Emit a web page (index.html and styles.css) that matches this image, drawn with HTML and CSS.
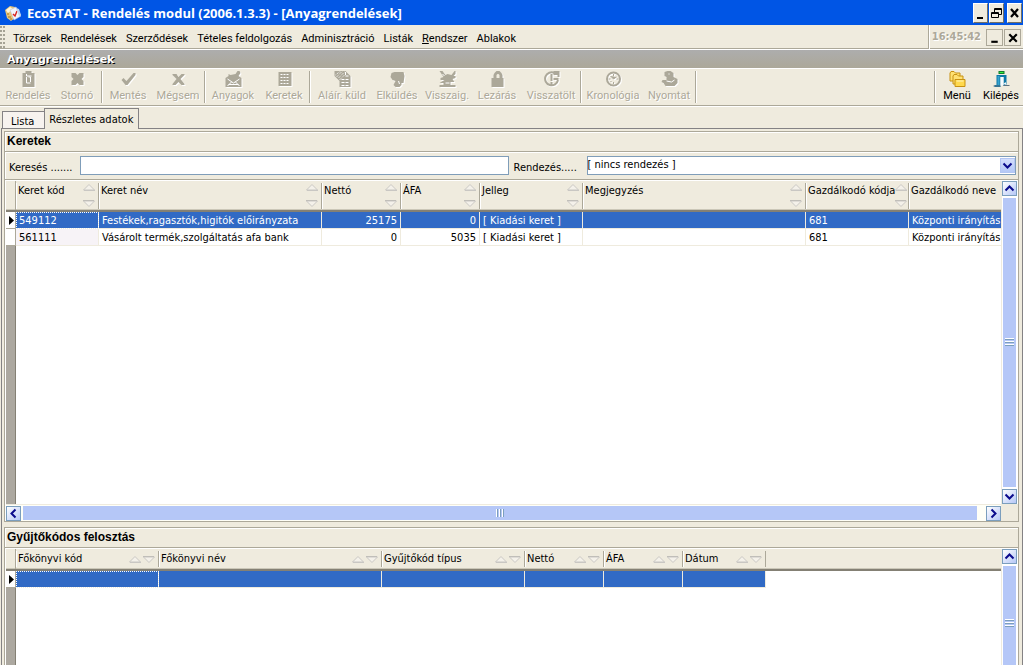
FILE: index.html
```html
<!DOCTYPE html>
<html lang="hu">
<head>
<meta charset="utf-8">
<title>EcoSTAT - Rendelés modul</title>
<link rel="stylesheet" href="styles.css">
</head>
<body>
<svg class="defs" aria-hidden="true">
  <symbol id="sort-up" viewBox="0 0 12 7"><path d="M.5 6 6 .5 11.500 6z" fill="#f4f1ea" stroke="#c9c7c3"/><path d="M1 6.500h11" stroke="#c9c7c3"/></symbol>
  <symbol id="sort-down" viewBox="0 0 12 7"><path d="M.5 1 6 6.500 11.500 1z" fill="#f4f1ea" stroke="#c9c7c3"/><path d="M0 .5h11" stroke="#c0beb9"/></symbol>
  <symbol id="chev-up" viewBox="0 0 13 13"><path d="M2.500 8.500 6.500 4.500l4 4" fill="none" stroke="#0a0a8c" stroke-width="2"/></symbol>
  <symbol id="chev-down" viewBox="0 0 13 13"><path d="M2.500 4.500 6.500 8.500l4-4" fill="none" stroke="#0a0a8c" stroke-width="2"/></symbol>
  <symbol id="chev-left" viewBox="0 0 13 13"><path d="M8.500 2.500 4.500 6.500l4 4" fill="none" stroke="#0a0a8c" stroke-width="2"/></symbol>
  <symbol id="chev-right" viewBox="0 0 13 13"><path d="M4.500 2.500 8.500 6.500l-4 4" fill="none" stroke="#0a0a8c" stroke-width="2"/></symbol>
</svg>

<header class="titlebar">
  <svg class="app-icon" viewBox="0 0 16 16"><path d="M0 5 5 1l5 1 1 10-5 4-4-3z" fill="#e9c77b"/><path d="m1 5 4-3 3 2-5 4z" fill="#fff6dc"/><path d="m5 5 6-3 5 9-7 4z" fill="#f2f5fb" stroke="#b9c3d6" stroke-width=".6"/><path d="m8 9 2 2 2-5" fill="none" stroke="#d8231f" stroke-width="1.400"/><path d="m11 3 3 1 2 6-2 1z" fill="#c5d6ee"/><path d="M2 9h2M3 12h3M5 14h2" stroke="#a8741c"/></svg>
  <h1>EcoSTAT - Rendelés modul (2006.1.3.3) - [Anyagrendelések]</h1>
  <div class="window-buttons">
    <button class="win" aria-label="Kis méret"><svg viewBox="0 0 13 18"><path d="M3 14h6" stroke="#000" stroke-width="2"/></svg></button>
    <button class="win" aria-label="Előző méret"><svg viewBox="0 0 13 18"><path d="M4.500 8V4.500h7v6H9M4 5.500h8M1.500 8.500h7v5h-7zM1 9.500h8" fill="none" stroke="#000"/></svg></button>
    <button class="win close" aria-label="Bezárás"><svg viewBox="0 0 13 18"><path d="m3 5 7 8M10 5l-7 8" stroke="#000" stroke-width="2.200"/></svg></button>
  </div>
</header>

<nav class="menubar">
  <span class="grip"></span>
  <div class="menus">
    <button>Törzsek</button><button>Rendelések</button><button>Szerződések</button><button>Tételes feldolgozás</button><button>Adminisztráció</button><button>Listák</button><button><u>R</u>endszer</button><button>Ablakok</button>
  </div>
  <div class="clock"><time>16:45:42</time></div>
  <button class="mdi" aria-label="Kis méret"><svg viewBox="0 0 14 14"><path d="M4 11h6" stroke="#000" stroke-width="2"/></svg></button>
  <button class="mdi" aria-label="Bezárás"><svg viewBox="0 0 14 14"><path d="m4 4 7 7M11 4l-7 7" stroke="#000" stroke-width="2"/></svg></button>
</nav>

<h2 class="form-title">Anyagrendelések</h2>

<div class="toolbar">
  <div class="group">
    <button class="tool w50" disabled><svg viewBox="0 0 16 16"><path d="M5 0h6v2h3v14H2V2h3z"/><path d="M6 3v2h5M6 6v6h4M8 6h2v5" class="cut"/></svg>Rendelés</button>
    <button class="tool w48" disabled><svg viewBox="0 0 16 16"><path d="M2 2h4l2 2 2-2h4v4l-2 2 2 2v4h-4l-2-2-2 2H2v-4l2-2-2-2z"/></svg>Stornó</button>
  </div>
  <div class="group">
    <button class="tool w48" disabled><svg viewBox="0 0 16 16"><path d="m1 9 2-2 3 3 7-8h2v2l-8 10H5z"/></svg>Mentés</button>
    <button class="tool w52" disabled><svg viewBox="0 0 16 16"><path d="M2 3h4l2 3 3-3h3v1l-4 4 4 5v1h-3l-3-3-3 3H2v-1l4-5-4-4z"/></svg>Mégsem</button>
  </div>
  <div class="group">
    <button class="tool w52" disabled><svg viewBox="0 0 16 16"><path d="m0 7 3-2V3l2 1 5-1 2-3h2l1 2-2 3 3 2v9H0z"/><path d="m2 8 6 4 6-4M2 15l4-4M14 15l-4-4M3 13.500h10" class="cut"/></svg>Anyagok</button>
    <button class="tool w50" disabled><svg viewBox="0 0 16 16"><path d="M2 1h13v14H2z"/><path d="M4 3.500h9M4 6.500h9M4 9.500h9M4 12.500h9" class="cut" stroke-dasharray="2 1"/></svg>Keretek</button>
  </div>
  <div class="group">
    <button class="tool w60" disabled><svg viewBox="0 0 16 16"><path d="M0 0h11l5 5v11H5V10L0 5z"/><path d="M11 1v4h4M7 8.500h7M7 11.500h7M7 14.500h7" class="cut" stroke-dasharray="3 1"/><path d="m1 4 5-4M2 6l6-6M4 7l6-6M5 9l5-5" class="cut" stroke-dasharray="1 1"/></svg>Aláír. küld</button>
    <button class="tool w50" disabled><svg viewBox="0 0 16 16"><path d="M2 2 5 1h9l1 4-1 7h-2v2l-2 2H6l-2-2 1-2 1-2-3-1-2-3z"/><path d="m9 10 1 3" class="cut"/></svg>Elküldés</button>
    <button class="tool w50" disabled><svg viewBox="0 0 16 16"><path d="M0 0h3l3 4 2-1 4 1 3-4h1v3l-2 2h2v2l-3 1 2 3h-4v3h5v2H0v-2h4v-2L0 12l5-3H1V7l3-1z"/><path d="M6 12h4M3 3l2 2" class="cut"/></svg>Visszaig.</button>
    <button class="tool w50" disabled><svg viewBox="0 0 16 16"><path d="M2 7h2V4l1-2 2-2h3l2 2 1 2v3h1v9H2z"/><path d="M7 7V4l1-1h1l1 1v3z" fill="#efebde"/></svg>Lezárás</button>
    <button class="tool w58" disabled><svg viewBox="0 0 16 16"><path d="M11 2a6.500 6.500 0 1 0 3.500 7" fill="none" stroke="#aca899" stroke-width="2"/><path d="M10 0h6v6h-2V4h-4zM7 3h2v7H7zM7 11h2v3H7zM10 7h5v2h-5z"/></svg>Visszatölt</button>
  </div>
  <div class="group">
    <button class="tool w60" disabled><svg viewBox="0 0 16 16"><circle cx="8" cy="8" r="6.500" fill="none" stroke="#aca899" stroke-width="2"/><path d="M8 3v2M8 11v2M3 8h2M11 8h2M5 5l3 3 3-2M5 11l1-1" stroke="#aca899"/></svg>Kronológia</button>
    <button class="tool w52" disabled><svg viewBox="0 0 16 16"><path d="M3 1 6 0h3l3 2v4l4 2v4l-3 3H4l-2-3-2-1 1-2h4V6L3 5z"/><path d="m5 10 5 1 3-2M7 3h1" class="cut"/></svg>Nyomtat</button>
  </div>
  <div class="group right">
    <button class="tool w44"><svg viewBox="0 0 16 16"><path d="M.5 10V2l1-1.500h3L6 2h4.500v8z" fill="#ffe173" stroke="#c79112"/><path d="M3.500 13V5l1-1.500h3L9 5h4.500v8z" fill="#ffe173" stroke="#c79112"/><path d="M5.500 15.500v-7h10v7z" fill="#ffd94d" stroke="#c79112"/><path d="M7 10h7" stroke="#fff4bd"/></svg>Menü</button>
    <button class="tool w44"><svg viewBox="0 0 16 16"><path d="M5 0h6v3H5z" fill="#157a2e"/><path d="M6 1h4v1H6z" fill="#33ef3c"/><path d="M3 4h10v11h-3V6H7v10H1v-2h2z" fill="#0d78a8"/><path d="M7 6h3v8l-3 1z" fill="#f6fbff"/><path d="M4 5h2v9H4z" fill="#36a3cf"/><path d="M0 15h7M10 14.500h6" stroke="#60717f"/><path d="m10 13 2-2 1 3z" fill="#fff"/></svg>Kilépés</button>
  </div>
</div>

<div class="tabs" role="tablist">
  <button class="tab" role="tab">Lista</button><button class="tab active" role="tab" aria-selected="true">Részletes adatok</button>
</div>

<main class="sheet">
  <section class="pane main-pane">
    <h3>Keretek</h3>
    <form class="filters">
      <label for="search">Keresés .......</label>
      <input id="search" type="text">
      <label for="order" class="order-label">Rendezés.....</label>
      <div class="combo">
        <select id="order"><option>[ nincs rendezés ]</option></select>
        <svg class="drop" viewBox="0 0 13 13"><use href="#chev-down"/></svg>
      </div>
    </form>
    <div class="grid-area">
      <div class="grid">
        <table class="tall">
          <colgroup><col class="c10"><col class="c83"><col class="c223"><col class="c79"><col class="c79"><col class="c103"><col class="c223"><col class="c103"><col></colgroup>
          <thead><tr>
            <th></th>
            <th><div>Keret kód<span><svg><use href="#sort-up"/></svg><svg><use href="#sort-down"/></svg></span></div></th>
            <th><div>Keret név<span><svg><use href="#sort-up"/></svg><svg><use href="#sort-down"/></svg></span></div></th>
            <th><div>Nettó<span><svg><use href="#sort-up"/></svg><svg><use href="#sort-down"/></svg></span></div></th>
            <th><div>ÁFA<span><svg><use href="#sort-up"/></svg><svg><use href="#sort-down"/></svg></span></div></th>
            <th><div>Jelleg<span><svg><use href="#sort-up"/></svg><svg><use href="#sort-down"/></svg></span></div></th>
            <th><div>Megjegyzés<span><svg><use href="#sort-up"/></svg><svg><use href="#sort-down"/></svg></span></div></th>
            <th><div>Gazdálkodó kódja<span><svg><use href="#sort-up"/></svg><svg><use href="#sort-down"/></svg></span></div></th>
            <th><div>Gazdálkodó neve</div></th>
          </tr></thead>
          <tbody>
            <tr class="selected"><th><svg class="marker" viewBox="0 0 5 9"><path d="M0 0v9l5-4.500z"/></svg></th><td class="focus">549112</td><td>Festékek,ragasztók,higitók előirányzata</td><td class="num">25175</td><td class="num">0</td><td>[ Kiadási keret ]</td><td></td><td>681</td><td>Központi irányítás</td></tr>
            <tr><th></th><td class="key">561111</td><td>Vásárolt termék,szolgáltatás afa bank</td><td class="num">0</td><td class="num">5035</td><td>[ Kiadási keret ]</td><td></td><td>681</td><td>Központi irányítás</td></tr>
          </tbody>
        </table>
        <div class="blank"></div>
        <div class="hscroll">
          <button aria-label="Balra"><svg><use href="#chev-left"/></svg></button>
          <div class="thumb"><i></i></div>
          <button aria-label="Jobbra"><svg><use href="#chev-right"/></svg></button>
        </div>
      </div>
      <div class="vscroll">
        <button aria-label="Fel"><svg><use href="#chev-up"/></svg></button>
        <div class="thumb"><i></i></div>
        <button aria-label="Le"><svg><use href="#chev-down"/></svg></button>
      </div>
    </div>
  </section>

  <section class="pane detail-pane">
    <h3>Gyűjtőkódos felosztás</h3>
    <div class="grid-area">
      <div class="grid">
        <div class="head-strip">
        <table class="short">
          <colgroup><col class="c10"><col class="c143"><col class="c223"><col class="c143"><col class="c79"><col class="c79"><col class="c83"></colgroup>
          <thead><tr>
            <th></th>
            <th><div>Főkönyvi kód<span><svg><use href="#sort-up"/></svg><svg><use href="#sort-down"/></svg></span></div></th>
            <th><div>Főkönyvi név<span><svg><use href="#sort-up"/></svg><svg><use href="#sort-down"/></svg></span></div></th>
            <th><div>Gyűjtőkód típus<span><svg><use href="#sort-up"/></svg><svg><use href="#sort-down"/></svg></span></div></th>
            <th><div>Nettó<span><svg><use href="#sort-up"/></svg><svg><use href="#sort-down"/></svg></span></div></th>
            <th><div>ÁFA<span><svg><use href="#sort-up"/></svg><svg><use href="#sort-down"/></svg></span></div></th>
            <th><div>Dátum<span><svg><use href="#sort-up"/></svg><svg><use href="#sort-down"/></svg></span></div></th>
          </tr></thead>
          <tbody>
            <tr class="selected"><th><svg class="marker" viewBox="0 0 5 9"><path d="M0 0v9l5-4.500z"/></svg></th><td class="focus"></td><td></td><td></td><td></td><td></td><td></td></tr>
          </tbody>
        </table>
        </div>
        <div class="blank"></div>
      </div>
      <div class="vscroll">
        <button aria-label="Fel"><svg><use href="#chev-up"/></svg></button>
        <div class="thumb"><i></i></div>
      </div>
    </div>
  </section>
</main>
</body>
</html>
```
FILE: styles.css
```css
* { box-sizing: border-box; }
body {
  margin: 0;
  height: 100vh;
  display: flex;
  flex-direction: column;
  overflow: hidden;
  background: #efebde;
  color: #000;
  font: 11px/14px "DejaVu Sans Condensed", "DejaVu Sans", sans-serif;
}
button, input, select { font: inherit; color: inherit; margin: 0; padding: 0; border: 0; background: none; border-radius: 0; }
h1, h2, h3 { margin: 0; }
svg { display: block; }
.defs { display: none; }

.titlebar { flex: none; height: 25px; display: flex; align-items: center; background: #0055e5; color: #fff; padding: 0 1px 0 5px; }
.app-icon { width: 16px; height: 18px; margin-right: 6px; }
h1 { flex: 1; font: bold 13px/18px "Open Sans", "Noto Sans", sans-serif; white-space: nowrap; }
.window-buttons { display: flex; }
.win { width: 15px; height: 20px; background: #efebde; border: 1px solid #fff; border-right-color: #716f64; border-bottom-color: #716f64; margin-right: 1px; }
.win svg { width: 13px; height: 18px; }
.win.close { margin: 0 0 0 2px; }

.menubar { flex: none; height: 25px; display: flex; align-items: center; border-bottom: 1px solid #fff; box-shadow: inset 0 -1px #aca899; padding-right: 2px; }
.grip { width: 6px; height: 22px; background: radial-gradient(circle at 1px 1px, #a5a294 1px, transparent 1px) 0 0 / 3px 4px; }
.menus { flex: 1; display: flex; gap: 9px; padding: 3px 0 0 7px; font-family: Roboto, "Liberation Sans", sans-serif; }
.menus button { white-space: nowrap; }
.clock { align-self: stretch; display: flex; align-items: center; border-left: 1px solid #aca899; box-shadow: inset 1px 0 #fff; padding: 0 4px 0 3px; color: #aca899; font-weight: bold; text-shadow: 1px 1px #fff; }
.mdi { width: 17px; height: 17px; border: 1px solid #aca899; margin-left: 1px; }
.mdi svg { width: 15px; height: 15px; }

.form-title { flex: none; height: 19px; padding-left: 7px; border-bottom: 1px solid #fff; background: linear-gradient(#adadad, #aca899); color: #fff; font: bold 11px/19px "DejaVu Sans", sans-serif; text-shadow: 1px 1px #000; }

.toolbar { flex: none; height: 38px; display: flex; padding: 2px 0 3px 3px; border-bottom: 1px solid #fff; box-shadow: inset 0 -1px #aca899; font-family: Roboto, "Liberation Sans", sans-serif; }
.group { display: flex; border-right: 1px solid #aca899; box-shadow: 1px 0 #fff; margin-right: 2px; }
.group.right { margin: 0 0 0 auto; border-right: 0; border-left: 1px solid #aca899; box-shadow: inset 1px 0 #fff; }
.tool { display: flex; flex-direction: column; align-items: center; gap: 2px; white-space: nowrap; }
.tool svg { width: 17px; height: 17px; }
.tool:disabled { color: #aca899; text-shadow: 1px 1px #fff; }
.tool:disabled svg { fill: #aca899; filter: drop-shadow(1px 1px 0 #fff); }
.cut { fill: none; stroke: #fff; }
.w44 { width: 44px; } .w48 { width: 48px; } .w50 { width: 50px; } .w52 { width: 52px; } .w58 { width: 58px; } .w60 { width: 60px; }

.tabs { flex: none; display: flex; align-items: flex-end; height: 22px; padding-left: 2px; position: relative; z-index: 1; }
.tab { height: 18px; padding: 3px 10px 0 8px; border: 1px solid #848284; border-right: 0; background: #f7f3ef; white-space: nowrap; }
.tab.active { height: 21px; padding: 1px 5px 0 4px; border-right: 1px solid #848284; border-bottom: 0; background: #efebde; }

.sheet { flex: 1; min-height: 0; margin: -1px 0 0 1px; padding: 2px 3px 0 2px; display: flex; flex-direction: column; gap: 5px; border: 1px solid #848284; border-bottom: 0; }
.pane { display: flex; flex-direction: column; min-height: 0; border: 1px solid #aca899; box-shadow: inset 1px 1px #fff; }
.main-pane { flex: 1; }
.detail-pane { flex: none; height: 138px; border-bottom: 0; overflow: hidden; }
h3 { flex: none; height: 20px; padding-left: 2px; border-bottom: 1px solid #aca899; font: bold 12px/19px "Liberation Sans", sans-serif; }
.filters { flex: none; display: flex; height: 28px; align-items: flex-start; padding: 3px 2px 0 4px; border-top: 1px solid #fff; border-bottom: 1px solid #aca899; }
.filters label { width: 71px; padding-top: 5px; white-space: nowrap; }
.filters .order-label { width: 73px; margin-left: 5px; }
.filters input, .combo select { height: 19px; width: 100%; background: #fff; border: 1px solid #7f9db9; }
.filters input { flex: 1 1 0; min-width: 0; }
.combo { flex: 1 1 3px; position: relative; }
.combo select { display: block; appearance: none; padding: 0 0 1px; }
.drop { position: absolute; right: 1px; top: 2px; width: 15px; height: 15px; border: 1px solid #b3c6f3; background: linear-gradient(#d3defc, #b4c8f6); }

.grid-area { flex: 1; min-height: 0; display: flex; border-top: 1px solid #fff; padding-left: 1px; }
.grid { flex: 1; min-width: 0; display: flex; flex-direction: column; background: #fff; }
table { flex: none; border-collapse: separate; border-spacing: 0; table-layout: fixed; width: 100%; }
.head-strip { background: linear-gradient(#efebde 19px, #cbc7b8 19px, #cbc7b8 20px, #848074 20px, #848074 22px, #fff 22px); }
.short { width: 760px; }
.c10 { width: 10px; } .c79 { width: 79px; } .c83 { width: 83px; } .c103 { width: 103px; } .c143 { width: 143px; } .c223 { width: 223px; }
thead th { padding: 2px 0 1px; background: #efebde; border-bottom: 2px solid #848074; box-shadow: inset 0 -1px #cbc7b8; font-weight: normal; text-align: left; }
thead div { display: flex; justify-content: space-between; height: 26px; padding: 1px 3px 0 2px; border-right: 1px solid #aca899; box-shadow: inset 1px 0 #fff; white-space: nowrap; }
.tall thead th:last-child div { border-right: 0; }
thead th:first-child { box-shadow: inset -1px 0 #aca899, inset 0 -1px #cbc7b8; }
thead span { display: flex; flex-direction: column; justify-content: space-between; padding: 0 0 2px; }
thead svg { width: 12px; height: 7px; }
.short thead th { padding-bottom: 2px; }
.short thead div { height: 16px; }
.short thead span { flex-direction: row; gap: 2px; padding-top: 4px; }
tbody td, tbody th { height: 17px; padding: 0 3px; line-height: 15px; border-right: 1px solid #efebde; border-bottom: 1px solid #efebde; white-space: nowrap; overflow: hidden; }
tbody th { padding: 0 0 0 3px; border-color: #aca899; background: #fff; }
.tall td:last-child { border-right: 0; }
.marker { width: 5px; height: 9px; }
.selected td { background: #316ac5; color: #fff; }
.selected .focus { outline: 1px dotted #fff; outline-offset: -1px; }
.key { background: #f7f3f7; }
.num { text-align: right; }
.blank { flex: 1; border-left: 9px solid #aca8a0; box-shadow: inset 1px 0 #848074; }

.hscroll { flex: none; height: 17px; display: flex; gap: 1px; padding: 1px 0; background: #fffff7; border-top: 1px solid #efebde; }
.vscroll { flex: none; width: 17px; display: flex; flex-direction: column; gap: 1px; padding: 0 1px 17px 0; border-left: 1px solid #efebde; background: #fff; }
.main-pane .vscroll { background: linear-gradient(#fff, #fff) 0 0 / 100% calc(100% - 17px) no-repeat; }
.detail-pane .vscroll { padding-bottom: 0; }
.hscroll button, .vscroll button { flex: none; width: 15px; height: 15px; border: 1px solid #7b9ebd; background: linear-gradient(135deg, #fff, #b5c7f7); }
.hscroll button svg, .vscroll button svg { width: 13px; height: 13px; }
.thumb { flex: 1; display: flex; align-items: center; justify-content: center; background: #b5c7f7; }
.hscroll .thumb { margin-right: 8px; margin-left: 1px; }
.vscroll .thumb { margin: 1px; }
.detail-pane .vscroll .thumb { flex: none; height: 114px; }
.hscroll i { width: 9px; height: 8px; background: repeating-linear-gradient(90deg, #fff 0 1px, #7b9ebd 1px 2px, transparent 2px 3px); }
.vscroll i { width: 9px; height: 9px; background: repeating-linear-gradient(#fff 0 1px, #7b9ebd 1px 2px, transparent 2px 3px); }
```
